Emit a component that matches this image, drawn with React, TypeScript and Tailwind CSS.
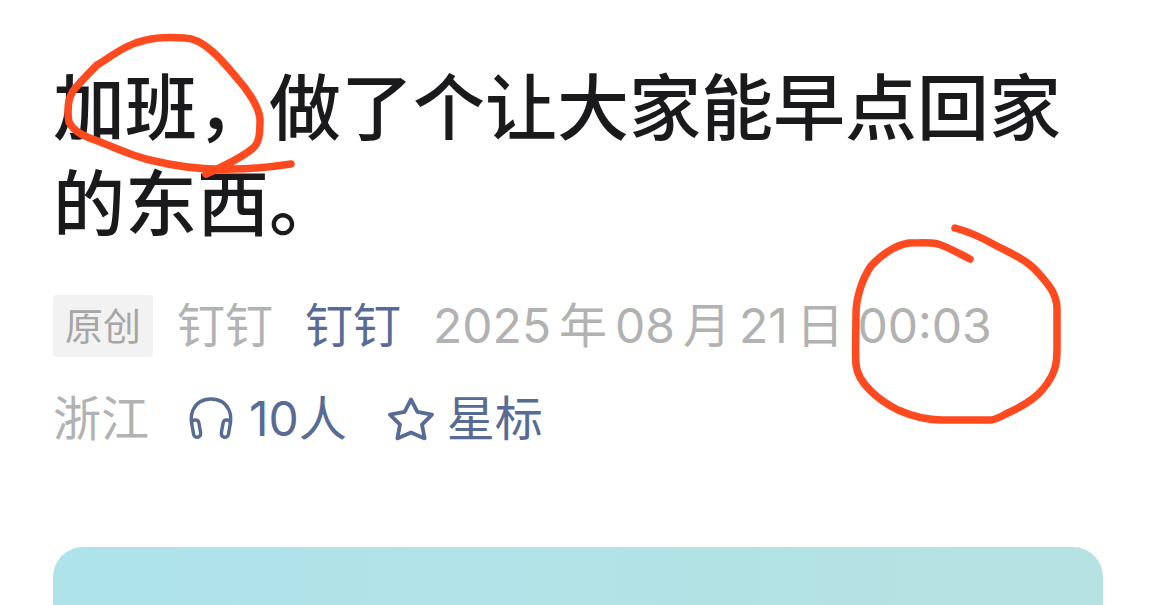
import type { ReactNode } from "react";

function HeadphoneIcon() {
  return (
    <svg viewBox="0 0 44 44" className="h-11 w-11 shrink-0" fill="none" stroke="currentColor" strokeWidth="3.4" strokeLinecap="round" strokeLinejoin="round" aria-hidden="true">
      <path d="M2.600 26C1.700 20 2.600 16 4 13C7.200 6 14 2 22 2S36.800 6 40 13C41.400 16 42.300 20 41.400 26" />
      <path d="M2.600 26C2.200 22.400 9 21.800 9.800 25.600L11.600 35.400C12.200 41 5.800 42 4.600 37.400Z" />
      <path d="M41.400 26C41.800 22.400 35 21.800 34.200 25.600L32.400 35.400C31.800 41 38.200 42 39.400 37.400Z" />
    </svg>
  );
}

function StarIcon() {
  return (
    <svg viewBox="0 0 48 44" className="h-11 w-12 shrink-0" fill="none" stroke="currentColor" strokeWidth="3.8" strokeLinejoin="round" aria-hidden="true">
      <path d="M24 2.500L30.400 14.800L45 17.600L35 27.600L37.600 41.400L24 35.400L10.400 41.400L13 27.600L3 17.600L17.600 14.800Z" />
    </svg>
  );
}

// hand drawn marker strokes on top of the header
function MarkerStrokes() {
  return (
    <svg viewBox="0 0 1163 460" className="pointer-events-none absolute left-0 top-0 h-[460px] w-[1163px]" fill="none" stroke="#ff4a20" strokeWidth="7.500" strokeLinecap="round" strokeLinejoin="round" aria-hidden="true">
      <path d="M206 174C222 167 242 157 252 149C260 143 260 132 260 119C259 106 246 88 236 77C222 60 203 38 185 38C172 37 157 37 146 40C126 44 112 56 97 65C88 74 80 82 73 91C68 99 67 110 69 122C74 132 84 136 95 140C114 147 132 156 150 160C178 167 207 170 232 169C253 169 271 167 291 164" />
      <path d="M970 259C958 253 948 247 938 244C930 242 919 243 909 243C894 245 879 257 871 266C862 279 856 298 856 314C856 330 855 347 856 365C858 384 880 401 898 410C914 417 929 420 942 420L991 420C998 419 1003 415 1010 412C1027 404 1041 395 1050 379C1057 368 1057 357 1057 346V309C1057 294 1048 284 1041 276C1028 260 1014 255 995 245C981 237 970 232 955 228" />
    </svg>
  );
}

function MetaLink({ children }: { children: ReactNode }) {
  return (
    <a href="#" className="flex items-center text-[#576b95]">
      {children}
    </a>
  );
}

export default function App() {
  return (
    <main className="h-screen overflow-hidden bg-white font-['Inter','Noto_Sans_CJK_SC',sans-serif]">
      <article className="relative pt-[55px] pr-[60px] pl-[53px]">
        <h1 className="font-['Noto_Sans_CJK_SC',sans-serif] text-[72px] leading-[96px] font-medium text-[#1a1a1c]">
          加班，做了个让大家能早点回家的东西。
        </h1>

        <div className="mt-8 text-[48px] leading-[93px] font-normal text-[#b2b2b2]">
          <div className="flex items-center whitespace-nowrap">
            <span className="mr-6 rounded-sm bg-[#f2f2f2] px-3 text-[38px] leading-[62px] text-[#a6a6a6]">原创</span>
            <span className="mr-8">钉钉</span>
            <MetaLink>钉钉</MetaLink>
            <time dateTime="2025-08-21T00:03" className="ml-8 flex gap-2">
              <span>2025</span>
              <span>年</span>
              <span>08</span>
              <span>月</span>
              <span>21</span>
              <span>日 00:03</span>
            </time>
          </div>
          <div className="flex items-center whitespace-nowrap">
            <span className="mr-10">浙江</span>
            <MetaLink>
              <HeadphoneIcon />
              <span className="ml-4">10人</span>
            </MetaLink>
            <button type="button" className="ml-10 flex items-center text-[#576b95]">
              <StarIcon />
              <span className="ml-3">星标</span>
            </button>
          </div>
        </div>

        <div className="mt-[82px] h-40 rounded-t-[30px] bg-linear-to-r from-[#aee3eb] to-[#b6e2e2]" />
        <MarkerStrokes />
      </article>
    </main>
  );
}
